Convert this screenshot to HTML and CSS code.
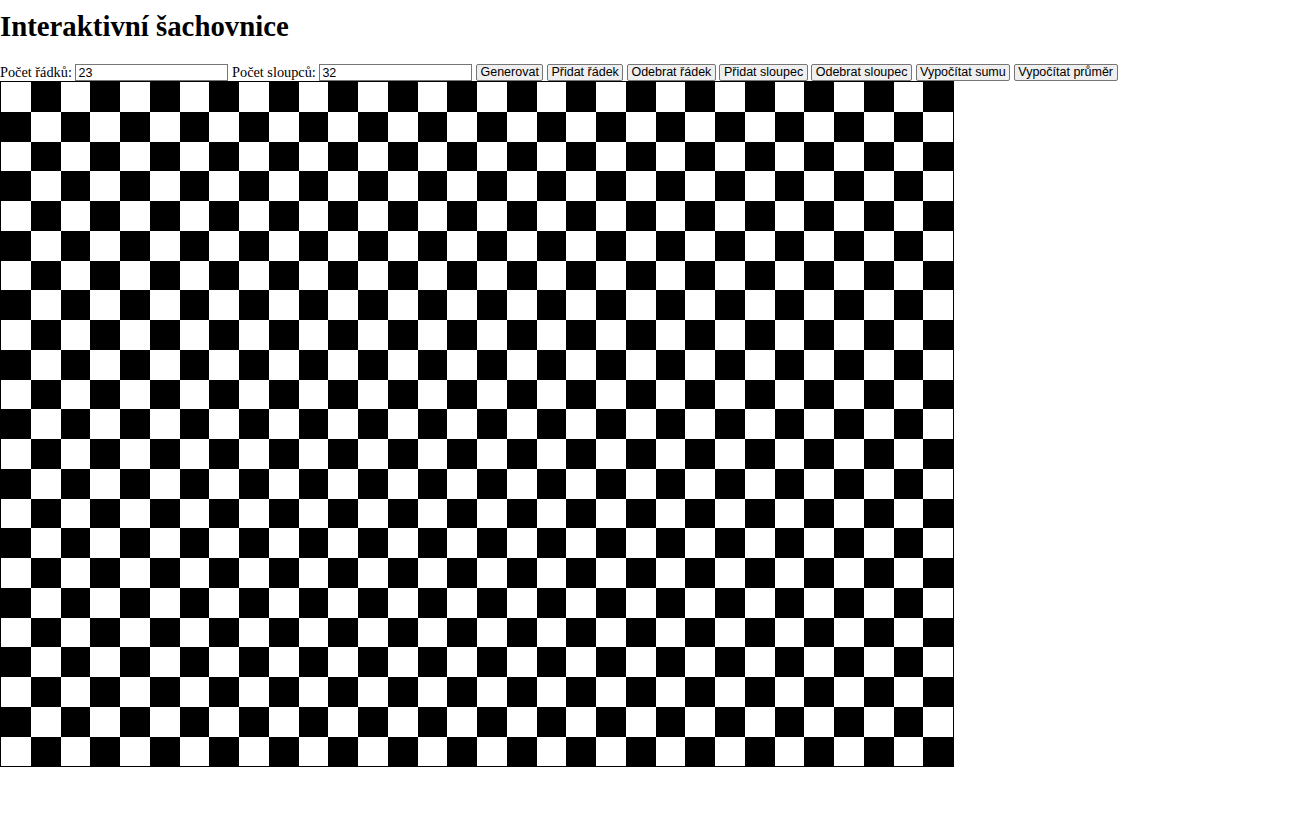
FILE: index.html
```html
<!DOCTYPE html>
<html lang="cs">
<head>
<meta charset="utf-8">
<title>Interaktivní šachovnice</title>
<link rel="stylesheet" href="styles.css">
</head>
<body>
<h1 class="title">Interaktivní šachovnice</h1>
<div class="controls">
<label class="lbl" for="rows">Počet řádků:</label> <input class="num" id="rows" type="text" value="23"> <label class="lbl" for="cols">Počet sloupců:</label> <input class="num" id="cols" type="text" value="32"> <button class="btn" id="gen">Generovat</button> <button class="btn">Přidat řádek</button> <button class="btn">Odebrat řádek</button> <button class="btn">Přidat sloupec</button> <button class="btn">Odebrat sloupec</button> <button class="btn">Vypočítat sumu</button> <button class="btn">Vypočítat průměr</button>
</div>
<div class="board" id="board"></div>
<script src="script.js"></script>
</body>
</html>
```
FILE: styles.css
```css
html, body {
  margin: 0;
  padding: 0;
  background: #fff;
}
body {
  font-family: "Liberation Serif", "Times New Roman", serif;
  font-size: 14.3px;
  color: #000;
}
.title {
  margin: 8px 0 18px 0;
  font-size: 28.8px;
  line-height: 37px;
  font-weight: bold;
}
.controls {
  height: 18px;
  line-height: 18px;
  white-space: nowrap;
  font-size: 14.3px;
}
.lbl {
  font-size: 14.3px;
}
.num {
  box-sizing: border-box;
  width: 153px;
  height: 17px;
  padding: 0 2px;
  margin: 1px 0 0 0;
  border: 1px solid #767676;
  font-family: "Liberation Sans", Arial, sans-serif;
  font-size: 12.5px;
  line-height: 15px;
  vertical-align: top;
  background: #fff;
  color: #000;
}
.btn {
  box-sizing: border-box;
  height: 17px;
  padding: 0 3.5px;
  margin: 1px 0 0 0;
  border: 1px solid #767676;
  border-radius: 2px;
  background: #efefef;
  font-family: "Liberation Sans", Arial, sans-serif;
  font-size: 12.5px;
  line-height: 15px;
  vertical-align: top;
  color: #000;
}
.board {
  display: grid;
  grid-template-columns: repeat(var(--cols, 32), 29.75px);
  grid-auto-rows: 29.75px;
  width: max-content;
  border: 1px solid #000;
}
.cell {
  background: #fff;
}
.cell.dark {
  background: #000;
}
```
FILE: script.js
```js
(function () {
  var board = document.getElementById('board');
  function build() {
    var r = parseInt(document.getElementById('rows').value, 10) || 0;
    var c = parseInt(document.getElementById('cols').value, 10) || 0;
    board.style.setProperty('--cols', c);
    board.innerHTML = '';
    for (var i = 0; i < r; i++) {
      for (var j = 0; j < c; j++) {
        var d = document.createElement('div');
        d.className = (i + j) % 2 ? 'cell dark' : 'cell';
        board.appendChild(d);
      }
    }
  }
  document.getElementById('gen').addEventListener('click', build);
  build();
})();
```
